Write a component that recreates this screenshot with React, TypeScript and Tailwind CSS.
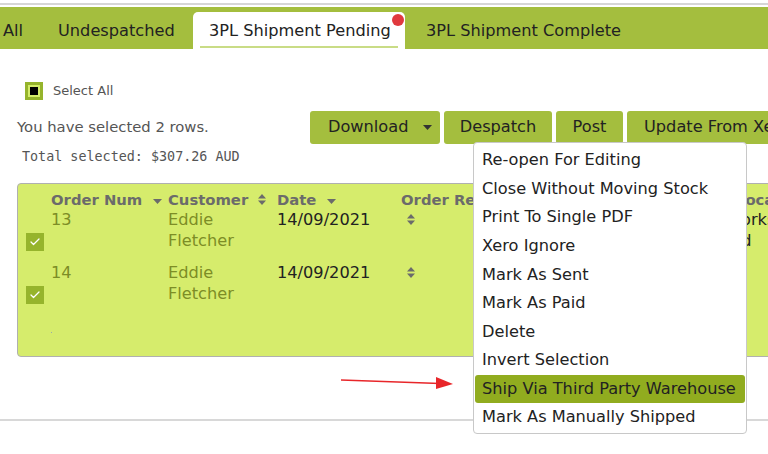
import { Check } from 'lucide-react';

const menuItems = [
  'Re-open For Editing',
  'Close Without Moving Stock',
  'Print To Single PDF',
  'Xero Ignore',
  'Mark As Sent',
  'Mark As Paid',
  'Delete',
  'Invert Selection',
  'Ship Via Third Party Warehouse',
  'Mark As Manually Shipped',
];

const rows = [
  { num: '13', first: 'Eddie', last: 'Fletcher', date: '14/09/2021', loc: ['Works', 'Ltd'] },
  { num: '14', first: 'Eddie', last: 'Fletcher', date: '14/09/2021', loc: [] as string[] },
];

function SortBoth({ className = '' }: { className?: string }) {
  return (
    <svg width="8" height="11" viewBox="0 0 8 11" className={className}>
      <path d="M4 0 L8 4.5 H0 Z" fill="#6b6b6b" />
      <path d="M4 11 L8 6.5 H0 Z" fill="#6b6b6b" />
    </svg>
  );
}

function SortDown({ className = '' }: { className?: string }) {
  return (
    <svg width="9" height="5" viewBox="0 0 9 5" className={className}>
      <path d="M0 0 H9 L4.5 5 Z" fill="#6b6b6b" />
    </svg>
  );
}

function RowCheck() {
  return (
    <div className="w-[18px] h-[18px] bg-[#96b42c] flex items-center justify-center">
      <Check size={12} strokeWidth={2.5} color="#ffffff" />
    </div>
  );
}

export default function App() {
  return (
    <div className="relative w-[768px] h-[454px] overflow-hidden bg-white font-['DejaVu_Sans',sans-serif] text-[#222]">
      {/* top rule */}
      <div className="h-[3px]" />
      <div className="h-[2px] bg-[#d6d6d6]" />
      <div className="h-[2px]" />

      {/* Tabs */}
      <nav className="h-[42px] bg-[#a4be3e] flex items-end text-[16.2px] whitespace-nowrap">
        <div className="h-[37px] w-[58px] shrink-0 flex items-center pl-[3px] pt-[2px]">All</div>
        <div className="h-[37px] w-[135px] shrink-0 flex items-center pt-[2px]">Undespatched</div>
        <div className="relative h-[37px] w-[212px] shrink-0 bg-white rounded-t-[5px] flex items-center pl-[16px] pt-[2px]">
          3PL Shipment Pending
          <span className="absolute right-[1px] top-[2px] w-[12px] h-[12px] rounded-full bg-[#e0393e]" />
          <span className="absolute left-[7px] right-[7px] bottom-[1px] h-[2px] bg-[#c9dc86]" />
        </div>
        <div className="h-[37px] flex items-center pl-[21px] pt-[2px]">3PL Shipment Complete</div>
      </nav>

      {/* Select all */}
      <div className="flex items-center gap-[10px] pl-[25px] pt-[32px]">
        <div className="w-[18px] h-[18px] border-[3px] border-[#96b42c] bg-[#d4ec6a] flex items-center justify-center">
          <div className="w-[8px] h-[8px] bg-black" />
        </div>
        <span className="text-[13px] text-[#555]">Select All</span>
      </div>

      {/* Selection info + actions */}
      <div className="flex pt-[10px]">
        <div className="w-[310px] shrink-0 pl-[17px]">
          <div className="h-[33px] flex items-center text-[14.8px] text-[#555]">You have selected 2 rows.</div>
          <div className="pl-[5px] pt-[3px] font-['DejaVu_Sans_Mono',monospace] text-[13.4px] text-[#555]">
            Total selected: $307.26 AUD
          </div>
        </div>
        <div className="flex gap-[4px] text-[16.2px] whitespace-nowrap">
          <div className="h-[33px] w-[130px] shrink-0 bg-[#a4be3e] rounded-[3px] flex items-center pl-[18px]">
            Download
            <svg width="9" height="5" viewBox="0 0 9 5" className="ml-[15px]">
              <path d="M0 0 H9 L4.5 5 Z" fill="#333" />
            </svg>
          </div>
          <div className="h-[33px] w-[108px] shrink-0 bg-[#a4be3e] rounded-[3px] flex items-center justify-center">Despatch</div>
          <div className="h-[33px] w-[67px] shrink-0 bg-[#a4be3e] rounded-[3px] flex items-center justify-center">Post</div>
          <div className="h-[33px] w-[170px] shrink-0 bg-[#a4be3e] rounded-[3px] flex items-center pl-[17px]">Update From Xero</div>
        </div>
      </div>

      {/* Table */}
      <div className="ml-[17px] mt-[16px] w-[770px] h-[174px] bg-[#d6ec6c] border border-[#b0b0b0] rounded-[4px] text-[16.2px] whitespace-nowrap">
        <div className="flex pt-[7px] font-bold text-[#6b6b6b] text-[14.8px] leading-[18px] items-center">
          <div className="w-[33px] shrink-0" />
          <div className="w-[117px] shrink-0 flex items-center">
            Order Num
            <SortDown className="ml-[11px] mt-[4px]" />
          </div>
          <div className="w-[109px] shrink-0 flex items-center">
            Customer
            <SortBoth className="ml-[10px]" />
          </div>
          <div className="w-[124px] shrink-0 flex items-center">
            Date
            <SortDown className="ml-[11px] mt-[4px]" />
          </div>
          <div className="w-[335px] shrink-0">Order Ref</div>
          <div>Location</div>
        </div>

        {rows.map((r) => (
          <div key={r.num} className="flex h-[53px] leading-[21px]">
            <div className="w-[33px] shrink-0 pl-[8px] pt-[24px]">
              <RowCheck />
            </div>
            <div className="w-[117px] shrink-0 text-[#7d8d26]">{r.num}</div>
            <div className="w-[109px] shrink-0 text-[#7d8d26]">
              <div>{r.first}</div>
              <div>{r.last}</div>
            </div>
            <div className="w-[124px] shrink-0">{r.date}</div>
            <div className="w-[325px] shrink-0 pl-[6px] pt-[5px]">
              <SortBoth />
            </div>
            <div>
              {r.loc.map((l) => (
                <div key={l}>{l}</div>
              ))}
            </div>
          </div>
        ))}
        <div className="ml-[33px] mt-[17px] w-[1px] h-[1px] bg-[#9aa]" />
      </div>

      {/* bottom rule */}
      <div className="mt-[62px] h-[2px] bg-[#d8d8d8]" />

      {/* Bulk actions menu */}
      <div className="absolute left-[473px] top-[142px] w-[274px] h-[292px] bg-white border border-[#c8c8c8] rounded-[4px] pt-[3px] text-[16.2px]">
        {menuItems.map((item) => (
          <div
            key={item}
            className={
              item === 'Ship Via Third Party Warehouse'
                ? 'h-[28.6px] mx-[1px] pl-[7px] flex items-center bg-[#91ac1f] rounded-[3px] whitespace-nowrap'
                : 'h-[28.6px] pl-[8px] flex items-center whitespace-nowrap'
            }
          >
            {item}
          </div>
        ))}
      </div>

      {/* annotation arrow */}
      <svg className="absolute left-[340px] top-[374px]" width="116" height="16" viewBox="0 0 116 16">
        <line x1="1" y1="6" x2="100" y2="9.5" stroke="#e8262a" strokeWidth="1.6" />
        <path d="M96 3 L113 10 L96 15 Z" fill="#e8262a" />
      </svg>
    </div>
  );
}
